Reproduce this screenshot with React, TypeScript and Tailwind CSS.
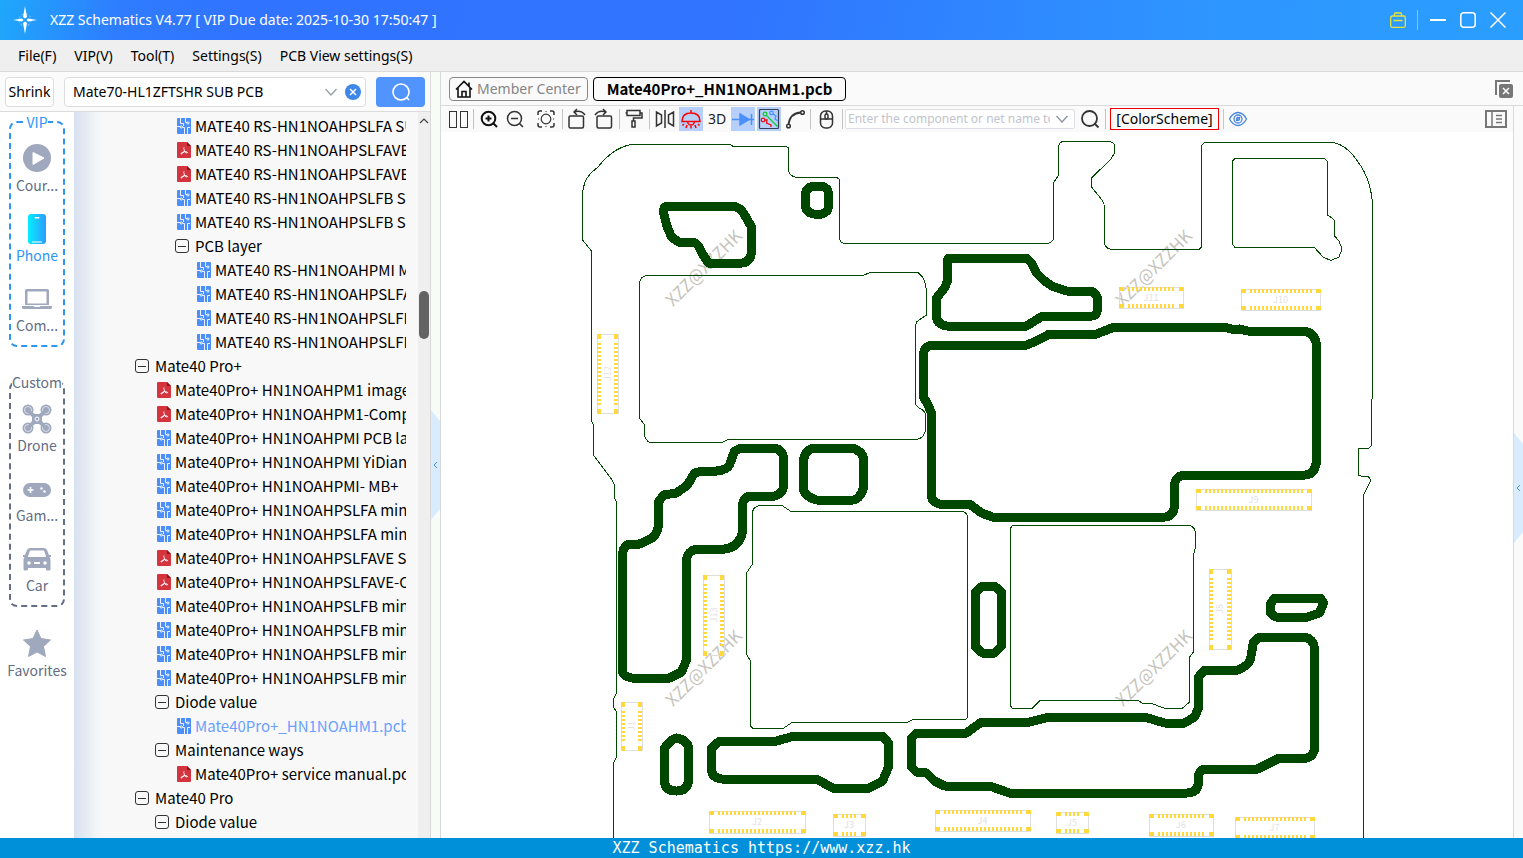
import { useState } from "react";
import type { ReactNode } from "react";

type Row = { kind: "pcb" | "pdf" | "group"; level: number; label: string };

const rows: Row[] = [
  { kind: "pcb", level: 2, label: "MATE40 RS-HN1NOAHPSLFA SUB PCB" },
  { kind: "pdf", level: 2, label: "MATE40 RS-HN1NOAHPSLFAVE SUB" },
  { kind: "pdf", level: 2, label: "MATE40 RS-HN1NOAHPSLFAVE-COM" },
  { kind: "pcb", level: 2, label: "MATE40 RS-HN1NOAHPSLFB SUB PCB" },
  { kind: "pcb", level: 2, label: "MATE40 RS-HN1NOAHPSLFB SUB PCB" },
  { kind: "group", level: 2, label: "PCB layer" },
  { kind: "pcb", level: 3, label: "MATE40 RS-HN1NOAHPMI MB PCB" },
  { kind: "pcb", level: 3, label: "MATE40 RS-HN1NOAHPSLFA SUB" },
  { kind: "pcb", level: 3, label: "MATE40 RS-HN1NOAHPSLFB SUB" },
  { kind: "pcb", level: 3, label: "MATE40 RS-HN1NOAHPSLFB SUB" },
  { kind: "group", level: 0, label: "Mate40 Pro+" },
  { kind: "pdf", level: 1, label: "Mate40Pro+ HN1NOAHPM1 image" },
  { kind: "pdf", level: 1, label: "Mate40Pro+ HN1NOAHPM1-Component" },
  { kind: "pcb", level: 1, label: "Mate40Pro+ HN1NOAHPMI PCB layer" },
  { kind: "pcb", level: 1, label: "Mate40Pro+ HN1NOAHPMI YiDian" },
  { kind: "pcb", level: 1, label: "Mate40Pro+ HN1NOAHPMI- MB+" },
  { kind: "pcb", level: 1, label: "Mate40Pro+ HN1NOAHPSLFA min" },
  { kind: "pcb", level: 1, label: "Mate40Pro+ HN1NOAHPSLFA min" },
  { kind: "pdf", level: 1, label: "Mate40Pro+ HN1NOAHPSLFAVE S" },
  { kind: "pdf", level: 1, label: "Mate40Pro+ HN1NOAHPSLFAVE-COM" },
  { kind: "pcb", level: 1, label: "Mate40Pro+ HN1NOAHPSLFB min" },
  { kind: "pcb", level: 1, label: "Mate40Pro+ HN1NOAHPSLFB min" },
  { kind: "pcb", level: 1, label: "Mate40Pro+ HN1NOAHPSLFB min" },
  { kind: "pcb", level: 1, label: "Mate40Pro+ HN1NOAHPSLFB min" },
  { kind: "group", level: 1, label: "Diode value" },
  { kind: "pcb", level: 2, label: "Mate40Pro+_HN1NOAHM1.pcb" },
  { kind: "group", level: 1, label: "Maintenance ways" },
  { kind: "pdf", level: 2, label: "Mate40Pro+ service manual.pdf" },
  { kind: "group", level: 0, label: "Mate40 Pro" },
  { kind: "group", level: 1, label: "Diode value" },
];

const indents = ["pl-[60px]", "pl-[80px]", "pl-[100px]", "pl-[120px]"];

// Board outline and shield lines
const thinPaths = [
  "M613.5 838V763L616.5 757V712L613.5 707V699L616.5 693V502L614.5 498V485L611.5 479L593.5 455V425L591.5 421V251L582.5 240V195Q583 181 591 173L598 167Q616 144 638 144L730.5 144.5L733 146.5H786.5L788.5 148V170Q789 176 796.5 177.5H836.5Q839.5 178 839.5 181V238Q840 243 845 243.5H1048Q1053 242 1053.5 238V183L1058.5 175V147Q1059 142 1063.5 141.5H1110Q1115 143 1114.5 147V153L1111 159L1091.5 178V187L1102 200Q1104.5 203 1104.5 208V243Q1105 248 1111 249.5H1198Q1201 249 1201.5 246V147Q1202 142.5 1207 142.5H1333Q1347 145 1358 162Q1371 179 1372.5 205V395L1371.5 403V445Q1370 448.500 1367 448.500H1358.500V475L1362 476.500H1368Q1372 479 1369 484L1363.500 495V838",
  "M639.500 283Q640 276 648 275.500H863L870 272.500H918Q926 278 926.500 292V315L917 321.500L915.500 325V403Q916 407 921 409Q925 411 925.500 415V430Q924 438 917 439.500H728L722 442.500H650Q645 440 644.500 435V425L639.500 418Z",
  "M1232.500 162Q1233 158.500 1237 158.500H1323Q1327 159 1327.500 163V215L1334 219.500L1334.500 236L1339 241L1342 249L1339 257L1331 260.500L1323 257L1314 247L1310 247.500H1235L1232.500 244Z",
  "M752.500 513Q753 506 761 505.500H782L791 511.500H963Q967 513 967.500 517V717Q967 719.500 964 719.500H913L907 722.500H792L783 728.500H754Q751 728 750.500 725V661L746.500 654V573L752.500 564Z",
  "M1010.500 530Q1010.500 525.500 1014 525.500H1189Q1194 526 1195.500 532V547L1193.500 555V652L1189.500 657V702L1182 708.500H1165L1153 704L1142 703L1138 700.500H1040L1032 708.500H1012.500L1010.500 706Z",
];

// Heavy shield walls
const thickPaths = [
  "M667 206H734Q741 208 744 213L752 227V253Q750 263 742 263H709L703 254L699 246Q696 242 692 242H679L672 237L667 225L664 212Q664 207 667 206Z",
  "M814 186H822Q829 188 829 194V206Q829 212 822 214H814Q806 212 806 206V194Q806 188 814 186Z",
  "M950 258H1027L1032 263L1037 273Q1047 284 1055 287L1067 291H1091Q1098 293 1098 300V310Q1097 316 1092 316H1043L1027 326H947Q937 324 937 316V298L945 288L948 281V261Q948 258 950 258Z",
  "M933 345H1027L1037 341L1050 334H1097L1115 327H1225L1235 330L1240 329L1248 331H1305Q1317 334 1317 347V462Q1315 475 1305 475H1184Q1176 477 1175 484V507Q1173 517 1165 517H993L982 513L970 504H940Q933 502 932 497V413L928 404L924 397V353Q925 346 933 345Z",
  "M742 448H775Q783 450 784 457V487Q783 494 775 496H750Q744 498 743 504V532Q740 547 725 549H697Q688 551 687 560V660L682 672L670 678H632Q624 676 623 672V553Q624 546 630 544H640L653 538Q659 532 659 523V502L664 495L677 493L688 485L695 473L703 471H717Q727 470 730 465L735 451Z",
  "M815 448H853Q864 452 864 460V488Q860 500 853 500H817Q804 496 804 488V460Q806 449 815 448Z",
  "M983 586H995L1002 592V646L995 653H983L976 647V592Z",
  "M1275 598H1321L1324 603L1320 613L1308 617H1276L1271 613V604Z",
  "M1260 637H1305Q1314 639 1315 648V750Q1313 757 1307 758H1280L1258 769H1205Q1199 771 1199 777V783Q1198 793 1187 793H1010L990 786H945L935 781L927 773L917 772L912 767V738L917 733H967L982 722H1030L1050 717H1145L1165 723H1185L1195 717L1199 708V677L1205 670H1238Q1249 666 1251 659L1254 642Z",
  "M672 740L677 738Q688 740 689 748V782Q687 791 677 791Q666 791 665 782V748Z",
  "M720 741H777L795 736H883L889 743V767L883 781L870 788H833L817 779H722Q713 778 712 770V748Z",
];

const connectors = [
  { id: "J12", x: 597, y: 334, w: 21, h: 79 },
  { id: "J13", x: 703, y: 575, w: 21, h: 80 },
  { id: "J1", x: 621, y: 702, w: 21, h: 48 },
  { id: "J8", x: 1209, y: 569, w: 22, h: 80 },
  { id: "J11", x: 1119, y: 287, w: 64, h: 21 },
  { id: "J10", x: 1241, y: 289, w: 79, h: 21 },
  { id: "J9", x: 1196, y: 489, w: 115, h: 21 },
  { id: "J2", x: 709, y: 811, w: 96, h: 22 },
  { id: "J3", x: 833, y: 814, w: 32, h: 22 },
  { id: "J4", x: 935, y: 810, w: 95, h: 21 },
  { id: "J5", x: 1056, y: 812, w: 32, h: 21 },
  { id: "J6", x: 1149, y: 814, w: 64, h: 22 },
  { id: "J7", x: 1235, y: 817, w: 79, h: 22 },
];

const watermarks = [
  [704, 268],
  [1154, 268],
  [704, 668],
  [1154, 668],
];

function Connector({ id, x, y, w, h }: { id: string; x: number; y: number; w: number; h: number }) {
  const vertical = h > w;
  const length = vertical ? h : w;
  const depth = vertical ? w : h;
  const pads: { at: number; size: number }[] = [{ at: 0, size: 5 }];
  for (let at = 9; at <= length - 10; at += 4) pads.push({ at, size: 2 });
  pads.push({ at: length - 4, size: 5 });
  const cx = x + w / 2;
  const cy = y + h / 2;
  return (
    <g>
      <rect x={x + 0.5} y={y + 0.5} width={w} height={h} fill="none" stroke="#dedede" shapeRendering="crispEdges" />
      <g fill="#ffd83b" shapeRendering="crispEdges">
        {pads.map(({ at, size }) =>
          [0, depth - 4].map((side) => (
            <rect
              key={`${at}-${side}`}
              x={vertical ? x + side : x + at}
              y={vertical ? y + at : y + side}
              width={vertical ? 4 : size}
              height={vertical ? size : 4}
            />
          ))
        )}
      </g>
      <text
        x={cx}
        y={cy + 3}
        textAnchor="middle"
        transform={vertical ? `rotate(-90 ${cx} ${cy})` : undefined}
        className="fill-[#e2e2e2] text-[9px]"
      >
        {id}
      </text>
    </g>
  );
}

function Board() {
  return (
    <svg viewBox="441 132 1072 706" className="block h-full w-full">
      {watermarks.map(([x, y]) => (
        <text
          key={`${x}-${y}`}
          x={x}
          y={y + 6}
          textAnchor="middle"
          transform={`rotate(-45 ${x} ${y})`}
          className="fill-[#c6c5bc] text-[17px]"
        >
          XZZ@XZZHK
        </text>
      ))}
      <g fill="none" stroke="#004800" shapeRendering="crispEdges">
        {thinPaths.map((d) => <path key={d} d={d} />)}
      </g>
      <g fill="none" stroke="#004800" strokeWidth="9" strokeLinejoin="round" shapeRendering="crispEdges" transform="translate(-0.5 0)">
        {thickPaths.map((d) => <path key={d} d={d} />)}
      </g>
      {connectors.map((c) => <Connector key={c.id} {...c} />)}
    </svg>
  );
}

function PcbIcon() {
  return (
    <svg viewBox="0 0 14 16" className="h-4 w-3.5 shrink-0" fill="none">
      <rect width="14" height="16" rx="1" fill="#4c8ffb" />
      <g stroke="#fff" strokeWidth="0.900">
        <path d="M3.500 0V5.500H6.500V8M8.500 0V4.500H10M0 8.500H3M5.500 9.500H7.500V16M10.500 16V9.500H13" />
        <circle cx="11" cy="5" r="1.100" />
        <circle cx="4.300" cy="9" r="1.100" />
      </g>
    </svg>
  );
}

function PdfIcon() {
  return (
    <svg viewBox="0 0 14 16" className="h-4 w-3.5 shrink-0" fill="none">
      <path d="M1 0H10L14 4V15A1 1 0 0 1 13 16H1A1 1 0 0 1 0 15V1A1 1 0 0 1 1 0Z" fill="#d4343e" />
      <path d="M10 0L14 4H10Z" fill="#8f1119" />
      <path d="M7 5.500C6.200 7 8 8 7.200 9.200C6.500 10.500 5 12 4 12C3.300 11.500 5.500 10.200 7.200 9.800C9 9.500 10.800 9.800 10.500 10.700C10 11.300 8 10.500 7.300 9.200" stroke="#fff" />
    </svg>
  );
}

function GroupIcon() {
  return (
    <svg viewBox="0 0 14 14" className="h-3.5 w-3.5 shrink-0" fill="none" stroke="#333">
      <rect x="0.5" y="0.5" width="13" height="13" rx="2.500" />
      <path d="M3 7.500H11" />
    </svg>
  );
}

function TreeRow({ row }: { row: Row }) {
  const active = row.label === "Mate40Pro+_HN1NOAHM1.pcb";
  return (
    <li className={indents[row.level]}>
      <button className={`flex h-6 w-full items-center overflow-hidden whitespace-nowrap ${active ? "text-[#6ba0ff]" : "text-black"}`}>
        <span className="flex w-5 shrink-0 items-center">
          {row.kind === "group" && <span className="pl-px"><GroupIcon /></span>}
          {row.kind === "pcb" && <span className="pl-[3px]"><PcbIcon /></span>}
          {row.kind === "pdf" && <span className="pl-[3px]"><PdfIcon /></span>}
        </span>
        <span className="pl-px">{row.label}</span>
      </button>
    </li>
  );
}

const sideIcons: Record<string, ReactNode> = {
  course: (
    <>
      <circle cx="14" cy="14" r="14" />
      <path d="M10 8.500L21 14L10 20.500Z" fill="#fff" stroke="#fff" strokeLinejoin="round" />
    </>
  ),
  phone: (
    <>
      <defs>
        <linearGradient id="phone-fill">
          <stop offset="0" stopColor="#05eefe" />
          <stop offset="1" stopColor="#2f9bff" />
        </linearGradient>
      </defs>
      <rect x="5" y="0" width="18" height="30" rx="3" fill="url(#phone-fill)" />
      <rect x="11.500" y="3" width="5" height="1.500" rx="0.700" fill="#fff" />
      <path d="M9 28H19" stroke="#fff" />
    </>
  ),
  computer: (
    <>
      <path fillRule="evenodd" d="M3.500 5H24.500A1.500 1.500 0 0 1 26 6.500V21H2V6.500A1.500 1.500 0 0 1 3.500 5ZM4.500 7.500V19.500H23.500V7.500Z" />
      <path d="M-1 22H10.500Q11 23 12 23H16Q17 23 17.500 22H29V23.500Q29 25 27 25H1Q-1 25 -1 23.500Z" />
    </>
  ),
  drone: (
    <g transform="translate(0 1)">
      {[[5, 5], [23, 5], [5, 23], [23, 23]].map(([x, y]) => (
        <g key={`${x}-${y}`}>
          <circle cx={x} cy={y} r="5.500" />
          <circle cx={x} cy={y} r="3.500" fill="none" stroke="#fff" strokeWidth="0.600" />
        </g>
      ))}
      <path d="M5 4L12 9H16L23 4L25 6L19 12V16L25 23L23 25L16 19H12L5 25L3 23L9 16V12L3 6Z" />
      <circle cx="14" cy="14" r="2" fill="none" stroke="#fff" />
    </g>
  ),
  game: (
    <g transform="translate(0 2)">
      <rect x="0" y="7" width="28" height="14" rx="7" />
      <path d="M4.500 14H10.500M7.500 11V17" stroke="#fff" strokeWidth="1.700" />
      <circle cx="18.500" cy="12.500" r="1.200" fill="#fff" />
      <circle cx="21.500" cy="15.500" r="1.200" fill="#fff" />
    </g>
  ),
  car: (
    <g transform="translate(0 1)">
      <path fillRule="evenodd" d="M7 3H21Q23 3 24 5L26 10H28V12H26.500Q27.500 13 27.500 15V24Q27.500 25.500 26 25.500H24.500Q23 25.500 23 24V23H5V24Q5 25.500 3.500 25.500H2Q0.500 25.500 0.500 24V15Q0.500 13 1.500 12H0V10H2L4 5Q5 3 7 3ZM7 5.500L4.800 12H23.200L21 5.500Z" />
      <circle cx="6" cy="18" r="1.800" fill="#fff" />
      <circle cx="22" cy="18" r="1.800" fill="#fff" />
      <rect x="11" y="17" width="6" height="2" fill="#fff" />
    </g>
  ),
  star: <path d="M14 1L18 9.500L27.500 11L20.500 17.500L22.500 27.500L14 23L5.500 27.500L7.500 17.500L0.500 11L10 9.500Z" stroke="#9fa8bd" strokeLinejoin="round" />,
};

function SideItem({ icon, label, active }: { icon: string; label: string; active?: boolean }) {
  return (
    <button className={`flex h-[70px] w-full flex-col items-center gap-[3px] pt-2.5 text-[14px] leading-5 ${active ? "text-[#2f95f5]" : "text-[#636d84]"}`}>
      <svg viewBox="0 0 28 28" className="h-7 w-7 shrink-0 overflow-visible" fill="#9fa8bd">
        {sideIcons[icon]}
      </svg>
      <span>{label}</span>
    </button>
  );
}

function Separator() {
  return <span className="h-5 w-px shrink-0 bg-[#c4c4c4]" />;
}

function Tool({ label, className, children }: { label: string; className: string; children: ReactNode }) {
  return (
    <button aria-label={label} className={`flex h-6 shrink-0 items-center justify-center ${className}`}>
      <svg viewBox="0 0 24 24" className="h-6 w-6" fill="none" stroke="#333" strokeWidth="1.500">
        {children}
      </svg>
    </button>
  );
}

function Toolbar() {
  const [net, setNet] = useState("");
  return (
    <div className="flex h-[26px] shrink-0 items-center bg-[#fafafa] pl-[5px] pr-1.5 font-['Noto_Sans',sans-serif]">
      <Tool label="Split view" className="w-6">
        <g strokeWidth="1"><rect x="3.500" y="4.500" width="7" height="16" /><rect x="14.500" y="4.500" width="7" height="16" /></g>
      </Tool>
      <span className="px-[3px]"><span className="block h-5 w-px bg-[#c4c4c4]" /></span>
      <Tool label="Zoom in" className="w-6">
        <circle cx="11.500" cy="11.500" r="6.800" strokeWidth="2" stroke="#111" />
        <path d="M16.500 16.500L20 20M8.500 11.500H14.500M11.500 8.500V14.500" strokeWidth="2" stroke="#111" />
      </Tool>
      <Tool label="Zoom out" className="w-7">
        <circle cx="11.500" cy="11.500" r="7" />
        <path d="M16.500 16.500L20 20M8 11.500H15" />
      </Tool>
      <Tool label="Fit to window" className="w-[33px]">
        <circle cx="12" cy="12" r="4.800" strokeWidth="1.200" />
        <path d="M4 8V6Q4 4 6 4H8M16 4H18Q20 4 20 6V8M20 16V18Q20 20 18 20H16M8 20H6Q4 20 4 18V16" />
        <path d="M4 12H5M19 12H20M12 4V5M12 19V20" strokeWidth="1" />
      </Tool>
      <Separator />
      <Tool label="Rotate left" className="w-7">
        <rect x="4" y="9" width="14.500" height="12" rx="1.500" />
        <path d="M9 5Q16 2.500 20 8M12 2L9 5L12 8" />
      </Tool>
      <Tool label="Rotate right" className="w-7">
        <rect x="4" y="9" width="14.500" height="12" rx="1.500" />
        <path d="M13 5Q6 2.500 2 8M10 2L13 5L10 8" />
      </Tool>
      <Separator />
      <Tool label="Paint" className="w-[29px]">
        <rect x="4" y="3.500" width="13" height="5" />
        <path d="M2.500 6H4M17 6H19V11H10.500V14" />
        <rect x="9" y="14" width="3" height="6" />
      </Tool>
      <Separator />
      <Tool label="Mirror" className="w-[29px]">
        <path d="M12 3V21M3.500 5V19L8.500 16V8ZM20.500 5V19L15.500 16V8Z" />
      </Tool>
      <Tool label="Lamp" className="w-6 bg-[#b6d0fb]">
        <g stroke="#f00">
          <path d="M3 14.500Q3 6 12 6Q21 6 21 14.500ZM12 3V6M8.500 14.500Q9 18 12 18Q15 18 15.500 14.500" />
          <path d="M5 17L3.500 18.500M8 18L7 21M12 19V21.500M16 18L17 21M19 17L20.500 18.500" />
        </g>
      </Tool>
      <button className="flex w-7 shrink-0 justify-center text-[14px] text-[#222]">3D</button>
      <Tool label="Diode" className="mr-0.5 w-6 bg-[#b6d0fb]">
        <path d="M1 12.500H23M20.500 7V18" stroke="#4a90fb" />
        <path d="M9 7L18 12.500L9 18Z" fill="#4a90fb" stroke="#4a90fb" />
      </Tool>
      <Tool label="Nets" className="w-6 bg-[#b6d0fb]">
        <rect x="2.500" y="2.500" width="19" height="19" rx="1" stroke="#333f55" strokeWidth="1.200" />
        <g strokeWidth="1.300">
          <path d="M9.500 8.500L20.500 19.500" stroke="#14c832" />
          <circle cx="8" cy="7" r="1.800" stroke="#14c832" />
          <path d="M16 7L19 9L18 12L21 14" stroke="#4a90fb" />
          <circle cx="14.500" cy="6" r="1.800" stroke="#4a90fb" />
          <path d="M8 13H10L9.500 16L14 18V20" stroke="#e11" />
          <circle cx="6" cy="13" r="1.800" stroke="#e11" />
        </g>
      </Tool>
      <Tool label="Arc" className="w-[29px]">
        <path d="M4.500 17.500Q6 6 17 5.500" strokeWidth="1.800" />
        <circle cx="4.500" cy="19" r="1.800" /><circle cx="18.500" cy="5.500" r="1.800" />
      </Tool>
      <Separator />
      <Tool label="Mouse" className="w-[31px]">
        <rect x="5.500" y="4" width="12" height="17" rx="5" />
        <path d="M5.500 12H17.500M11.500 4V7" />
        <rect x="10" y="7" width="3" height="5" rx="1.500" />
      </Tool>
      <Separator />
      <div className="ml-0.5 flex h-5 w-[230px] items-center rounded-xs border border-[#dcdfe6] bg-white pl-0.5 pr-1.5">
        <input
          aria-label="Component or net name"
          value={net}
          onChange={(e) => setNet(e.target.value)}
          placeholder="Enter the component or net name to search"
          className="w-[202px] min-w-0 bg-transparent text-[12px] outline-none placeholder:text-[#c0c4cc]"
        />
        <button aria-label="Show names" className="ml-auto">
          <svg viewBox="0 0 12 8" className="h-2 w-3" fill="none" stroke="#8c929e" strokeWidth="1.300"><path d="M0.500 1L6 7L11.500 1" /></svg>
        </button>
      </div>
      <Tool label="Find" className="w-[30px]">
        <circle cx="11.500" cy="11.500" r="7.500" strokeWidth="1.800" />
        <path d="M17 17L20.500 20.500" strokeWidth="1.800" />
      </Tool>
      <Separator />
      <button className="mx-1 flex h-[22px] w-[109px] shrink-0 items-center justify-center border border-[#f00000] text-[14px] text-black">[ColorScheme]</button>
      <Separator />
      <Tool label="Preview" className="w-7">
        <g stroke="#4a86dc" strokeWidth="1.300">
          <path d="M3.500 12Q7 5.500 12 5.500T20.500 12Q17 18.500 12 18.500T3.500 12Z" />
          <circle cx="12" cy="12" r="4" /><circle cx="12" cy="12" r="1.500" /><path d="M10 14L14 10" />
        </g>
      </Tool>
      <button aria-label="Toggle panel" className="ml-auto">
        <svg viewBox="0 0 22 18" className="h-[18px] w-[22px]" fill="none" stroke="#777">
          <rect x="1" y="1" width="20" height="16" strokeWidth="2" />
          <path d="M7 1V17M11 5.500H17M11 9H17M11 12.500H17" strokeWidth="1.500" />
        </svg>
      </button>
    </div>
  );
}

function Handle() {
  return (
    <button aria-label="Collapse" className="flex h-[110px] w-[9px] items-center justify-center bg-[#d9ecfd] [clip-path:polygon(0_0,100%_10%,100%_90%,0_100%)]">
      <svg viewBox="0 0 5 8" className="h-2 w-[5px]" fill="none" stroke="#4a90e2"><path d="M4 1L1 4L4 7" /></svg>
    </button>
  );
}

export default function App() {
  const [query, setQuery] = useState("Mate70-HL1ZFTSHR SUB PCB");
  return (
    <div className="flex h-screen flex-col overflow-hidden bg-white font-['Noto_Sans_CJK_SC',sans-serif] text-[15px] leading-5">
      <header className="flex h-10 shrink-0 items-center bg-[linear-gradient(100deg,#1ea8fb_0%,#2f7cff_8%,#3073ff_16%,#3074ff_48%,#2e96ff_80%,#2a9eff_100%)] pl-3 pr-[17px] text-white">
        <svg viewBox="0 0 26 30" className="h-[30px] w-[26px]" fill="#fff">
          <circle cx="13" cy="15" r="6" fill="none" stroke="#9fd0ff" strokeDasharray="2 2" />
          <path d="M13 1L15 12L13 13.500L11 12ZM13 29L15 18L13 16.500L11 18ZM1 15L10 13.500L11.500 15L10 16.500ZM25 15L16 13.500L14.500 15L16 16.500Z" />
        </svg>
        <h1 className="ml-3 font-['Noto_Sans',sans-serif] text-[14px]">XZZ Schematics V4.77 [ VIP Due date: 2025-10-30 17:50:47 ]</h1>
        <div className="ml-auto flex items-center">
          <button aria-label="Toolbox">
            <svg viewBox="0 0 16 16" className="h-4 w-4" fill="none" stroke="#e8e337" strokeWidth="1.300">
              <rect x="0.700" y="4" width="14.600" height="11.300" rx="1.500" />
              <path d="M4 4L5 1H11L12 4M3.500 8.500H12.500" />
            </svg>
          </button>
          <span className="ml-[11px] mr-3 h-5 w-px bg-white/40" />
          <div className="flex items-center gap-3.5">
            <button aria-label="Minimize"><svg viewBox="0 0 16 16" className="h-4 w-4" stroke="#fff" strokeWidth="2"><path d="M0 8H16" /></svg></button>
            <button aria-label="Maximize"><svg viewBox="0 0 16 16" className="h-4 w-4" fill="none" stroke="#fff" strokeWidth="1.500"><rect x="0.800" y="0.800" width="14.400" height="14.400" rx="3" /></svg></button>
            <button aria-label="Close"><svg viewBox="0 0 16 16" className="h-4 w-4" stroke="#fff" strokeWidth="1.500"><path d="M0.500 0.500L15.500 15.500M15.500 0.500L0.500 15.500" /></svg></button>
          </div>
        </div>
      </header>

      <nav className="flex h-8 shrink-0 items-center gap-[18px] border-b border-[#dadada] bg-[#efefef] pl-[18px] pt-px font-['Noto_Sans',sans-serif] text-[14px] text-black">
        {["File(F)", "VIP(V)", "Tool(T)", "Settings(S)", "PCB View settings(S)"].map((item) => (
          <button key={item}>{item}</button>
        ))}
      </nav>

      <div className="flex min-h-0 flex-1">
        <aside className="flex w-[431px] shrink-0 flex-col border-r border-[#d9d9d9]">
          <div className="flex h-10 shrink-0 items-center border-b border-[#d9dbdf] bg-[#fbfbfb] px-[5px] font-['Noto_Sans',sans-serif] text-[14px]">
            <button className="flex h-[30px] w-[49px] shrink-0 items-center justify-center rounded-sm border border-[#dcdcdc] bg-white text-black">Shrink</button>
            <div className="ml-2.5 mr-2.5 flex h-[30px] min-w-0 flex-1 items-center rounded-sm border border-[#dcdcdc] bg-white pl-2 pr-1">
              <input aria-label="Search files" value={query} onChange={(e) => setQuery(e.target.value)} className="min-w-0 flex-1 bg-transparent text-black outline-none" />
              <button aria-label="History">
                <svg viewBox="0 0 12 8" className="h-2 w-3" fill="none" stroke="#989da8" strokeWidth="1.300"><path d="M0.500 1L6 7L11.500 1" /></svg>
              </button>
              <button aria-label="Clear" className="ml-2" onClick={() => setQuery("")}>
                <svg viewBox="0 0 16 16" className="h-4 w-4"><circle cx="8" cy="8" r="8" fill="#3c87e8" /><path d="M5 5L11 11M11 5L5 11" stroke="#fff" strokeWidth="1.500" /></svg>
              </button>
            </div>
            <button aria-label="Search" className="flex h-[30px] w-[49px] shrink-0 items-center justify-center rounded-sm bg-[#5294fe]">
              <svg viewBox="0 0 20 20" className="h-5 w-5" fill="none" stroke="#fff" strokeWidth="1.600"><circle cx="10" cy="10" r="8" /><path d="M15.500 15.500L18 18" /></svg>
            </button>
          </div>

          <div className="flex min-h-0 flex-1">
            <div className="flex w-[74px] shrink-0 flex-col items-center">
              <fieldset className="h-[235px] w-14 min-w-0 rounded-lg border-2 border-dashed border-[#2f95f5] pt-0.5">
                <legend className="mx-auto text-[14px] leading-5 text-[#2f95f5]">VIP</legend>
                <SideItem icon="course" label="Cour..." />
                <SideItem icon="phone" label="Phone" active />
                <SideItem icon="computer" label="Com..." />
              </fieldset>
              <fieldset className="mt-[25px] h-[235px] w-14 min-w-0 rounded-lg border-2 border-dashed border-[#636d84] pt-0.5">
                <legend className="mx-auto text-[14px] leading-5 text-[#636d84]">Custom</legend>
                <SideItem icon="drone" label="Drone" />
                <SideItem icon="game" label="Gam..." />
                <SideItem icon="car" label="Car" />
              </fieldset>
              <div className="mt-3 w-full">
                <SideItem icon="star" label="Favorites" />
              </div>
            </div>

            <div className="min-w-0 flex-1 overflow-hidden bg-[#f8f8f8] bg-[linear-gradient(90deg,#d8e1f1_0px,#e6ebf2_12px,#f3f5f7_22px,#f8f8f8_32px)] pr-3 pt-0.5">
              <ul>{rows.map((row, i) => <TreeRow key={i} row={row} />)}</ul>
            </div>
            <div className="flex w-3 shrink-0 flex-col items-center bg-[#efefef]">
              <svg viewBox="0 0 10 6" className="mt-1.5 h-1.5 w-2.5" fill="none" stroke="#444" strokeWidth="1.200"><path d="M1 5L5 1L9 5" /></svg>
              <span className="mt-[167px] h-12 w-2.5 rounded-full bg-[#636363]" />
            </div>
          </div>
        </aside>

        <div className="flex w-[10px] shrink-0 flex-col justify-center border-r border-[#d9d9d9] bg-[#f8fcf8] pt-5">
          <Handle />
        </div>

        <main className="flex min-w-0 flex-1 flex-col">
          <div className="flex h-[34px] shrink-0 items-center gap-[5px] border-b border-[#d9d9d9] bg-[#fafafa] pl-2 pr-2.5">
            <button className="flex h-6 w-[139px] items-center gap-1 rounded-sm border border-[#888] pl-[5px] font-['Noto_Sans',sans-serif] text-[14px] text-[#858585]">
              <svg viewBox="0 0 18 18" className="h-[18px] w-[18px] shrink-0" fill="none" stroke="#111" strokeWidth="1.600"><path d="M1 9.500L9 1.500L17 9.500M3 8V17H15V8M7 17V11.500H11V17M14 2.500V6" /></svg>
              Member Center
            </button>
            <button className="flex h-6 w-[253px] items-center justify-center rounded-sm border border-black font-bold text-black">Mate40Pro+_HN1NOAHM1.pcb</button>
            <button aria-label="Close all" className="ml-auto">
              <svg viewBox="0 0 18 18" className="h-[18px] w-[18px]" fill="none">
                <path d="M1 15V1H15" stroke="#777" strokeWidth="2" />
                <rect x="4" y="4" width="14" height="14" rx="2" fill="#777" />
                <path d="M8 8L14 14M14 8L8 14" stroke="#fff" strokeWidth="1.500" />
              </svg>
            </button>
          </div>
          <div className="flex min-h-0 flex-1">
            <div className="flex min-w-0 flex-1 flex-col">
              <Toolbar />
              <div className="min-h-0 flex-1">
                <Board />
              </div>
            </div>
            <div className="flex w-[10px] shrink-0 flex-col justify-center border-l border-[#d9d9d9] bg-[#fafafa] pt-8">
              <Handle />
            </div>
          </div>
        </main>
      </div>

      <footer className="flex h-5 shrink-0 items-center justify-center bg-[#0090d9] font-['DejaVu_Sans_Mono',monospace] text-[15px] text-white">
        XZZ Schematics https://www.xzz.hk
      </footer>
    </div>
  );
}
